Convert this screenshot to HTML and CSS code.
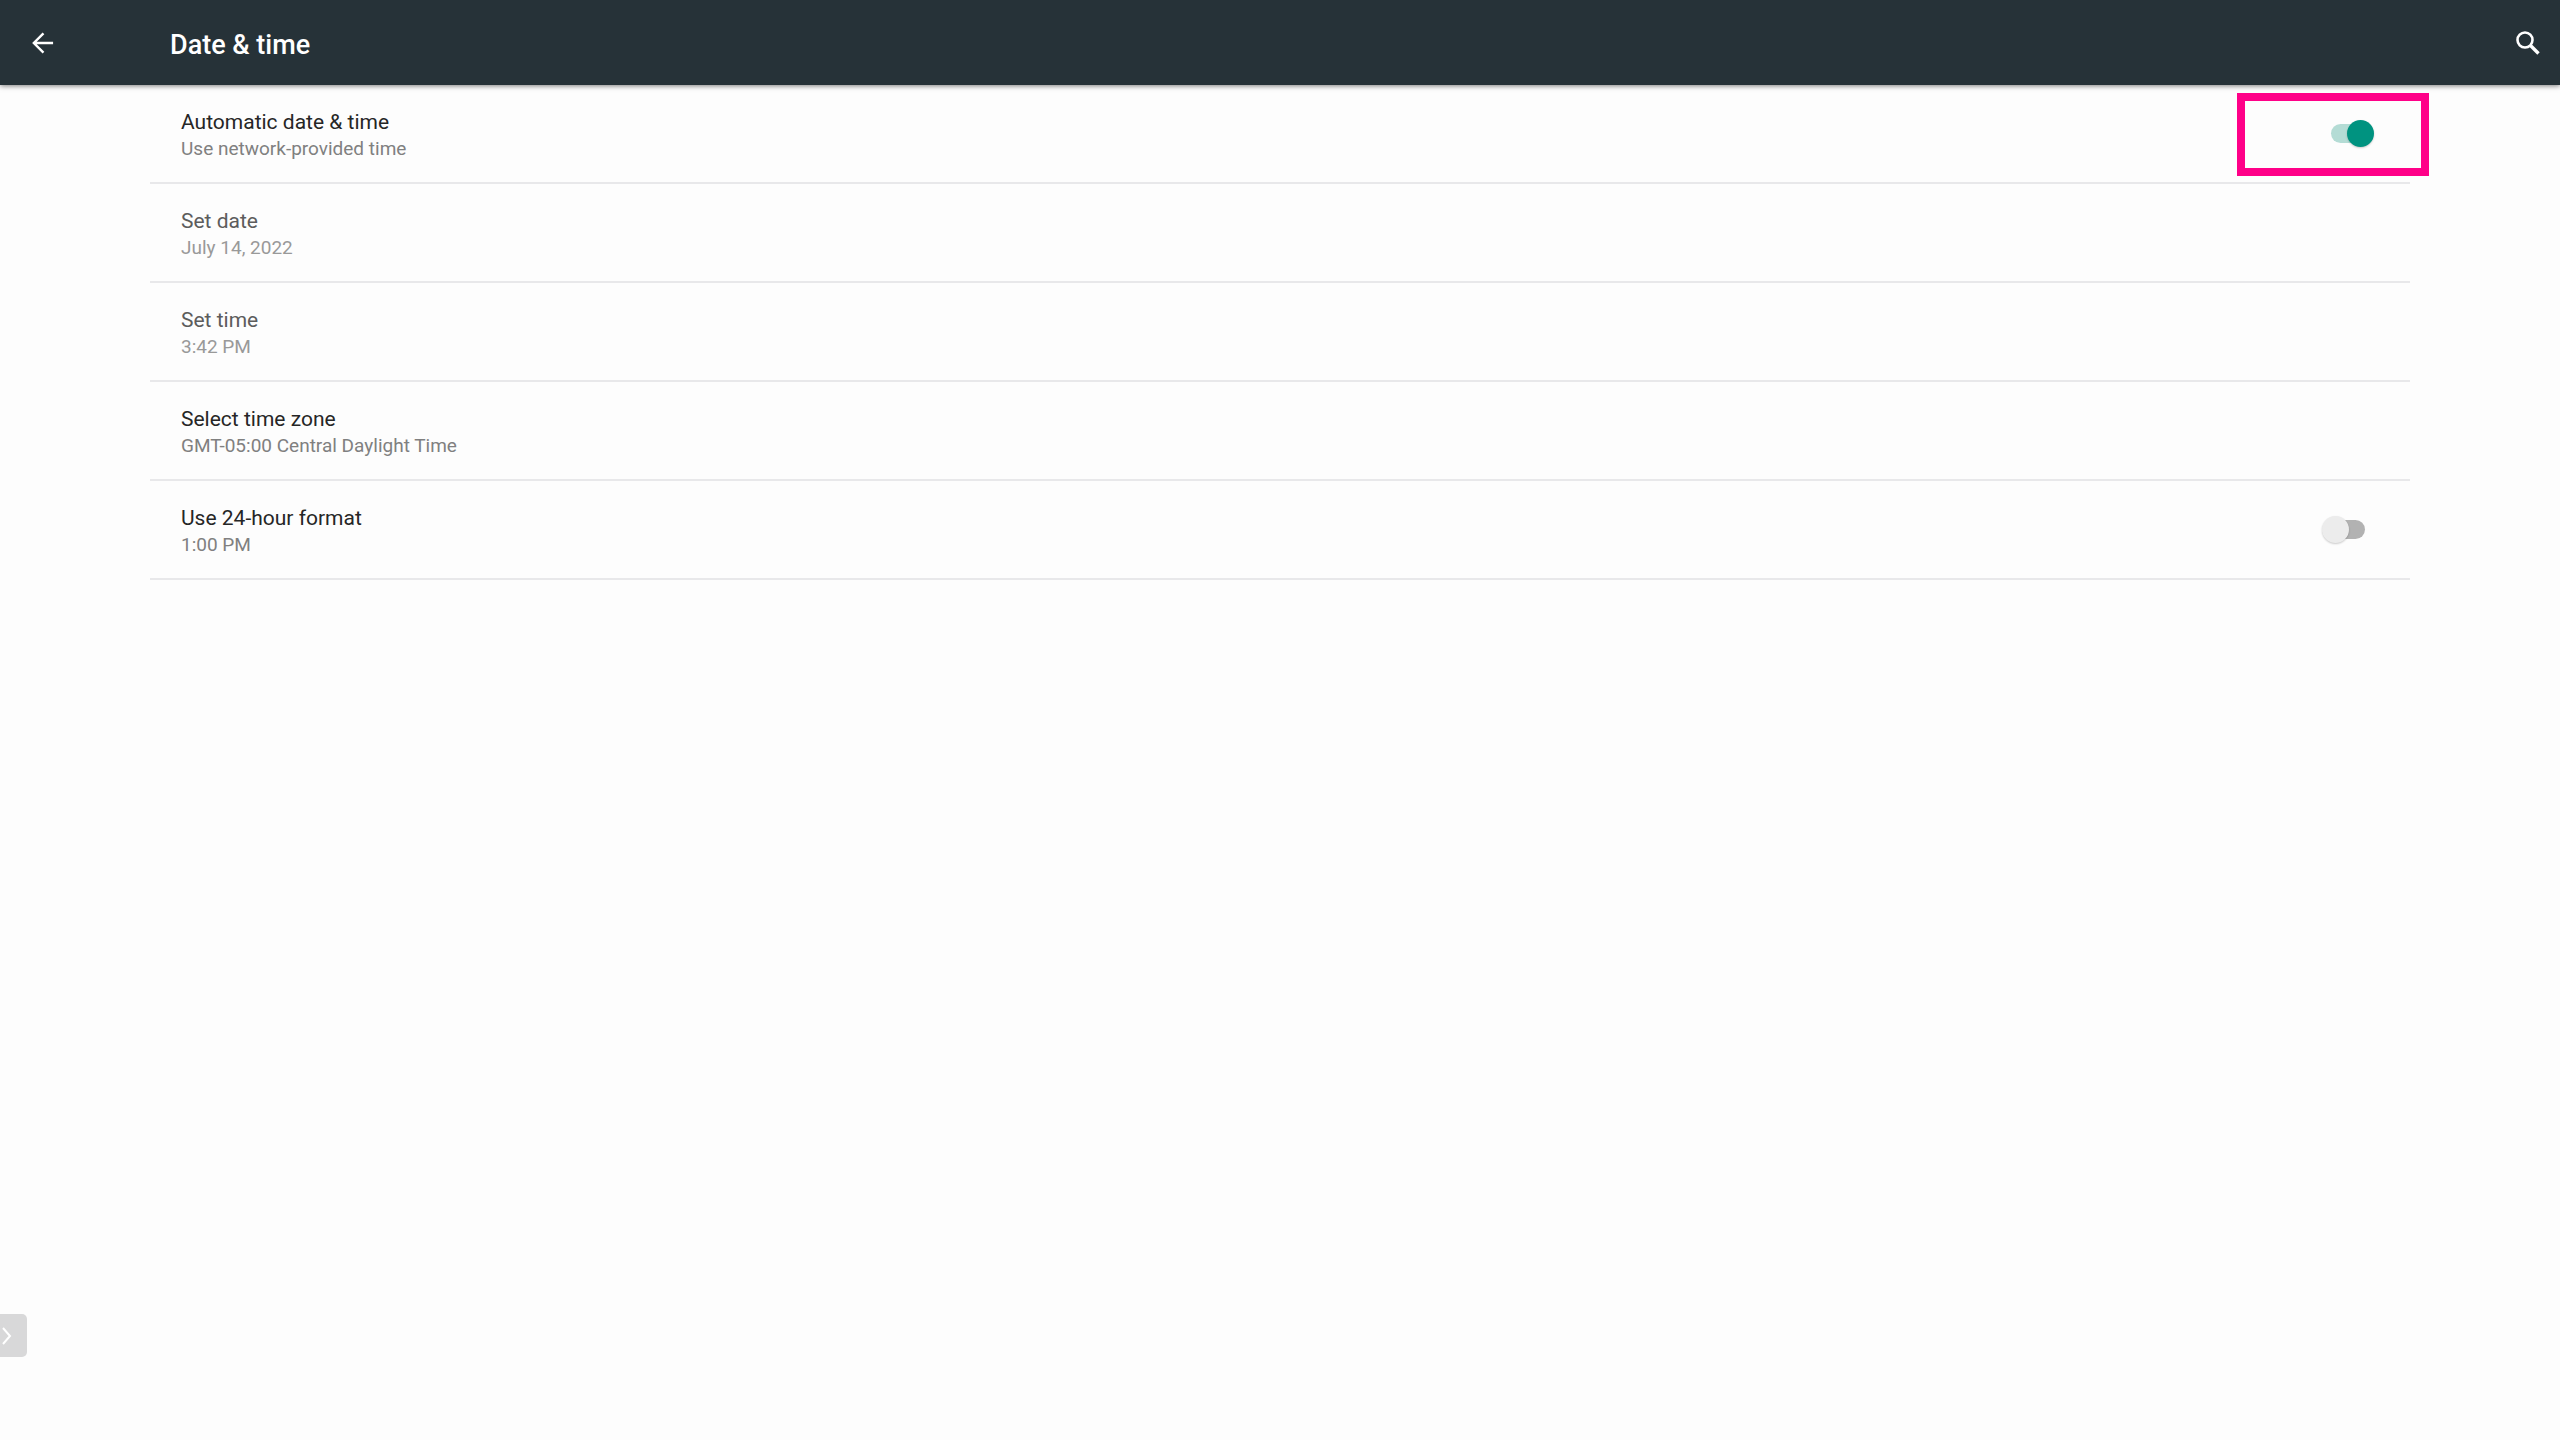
FILE: index.html
```html
<!DOCTYPE html>
<html lang="en">
<head>
  <meta charset="UTF-8" />
  <title>Date &amp; time</title>
  <link rel="stylesheet" href="styles.css">
</head>
<body>
  <header class="toolbar">
    <button class="icon-button back" aria-label="Back">
      <svg viewBox="0 0 24 24" fill="none" stroke="currentColor" stroke-width="2.6">
        <path d="M23 12H2.5M12.5 1.5L2 12l10.500 10.500" />
      </svg>
    </button>
    <h1>Date &amp; time</h1>
    <button class="icon-button search" aria-label="Search">
      <svg viewBox="0 0 24 24" fill="none" stroke="currentColor">
        <circle cx="9" cy="9" r="7.500" stroke-width="2.600" />
        <path d="M14.500 14.500L22.500 22.500" stroke-width="3.400" />
      </svg>
    </button>
  </header>

  <main class="settings">
    <div class="row">
      <label class="text" for="autoTime">
        <span class="name">Automatic date &amp; time</span>
        <span class="summary">Use network-provided time</span>
      </label>
      <input class="switch" type="checkbox" id="autoTime" checked>
      <div class="highlight"></div>
    </div>

    <button class="row" disabled>
      <span class="text">
        <span class="name">Set date</span>
        <span class="summary">July 14, 2022</span>
      </span>
    </button>

    <button class="row" disabled>
      <span class="text">
        <span class="name">Set time</span>
        <span class="summary">3:42 PM</span>
      </span>
    </button>

    <button class="row">
      <span class="text">
        <span class="name">Select time zone</span>
        <span class="summary">GMT-05:00 Central Daylight Time</span>
      </span>
    </button>

    <div class="row">
      <label class="text" for="hourFormat">
        <span class="name">Use 24-hour format</span>
        <span class="summary">1:00 PM</span>
      </label>
      <input class="switch" type="checkbox" id="hourFormat">
    </div>
  </main>

  <button class="side-tab" aria-label="Open side panel">
    <svg viewBox="0 0 10 18" fill="none" stroke="currentColor" stroke-width="2">
      <path d="M1 1l7 8-7 8" />
    </svg>
  </button>
</body>
</html>
```

FILE: styles.css
```css
* {
  box-sizing: border-box;
}

body {
  margin: 0;
  font-family: Roboto, sans-serif;
  background-color: #fdfdfd;
  color: #262626;
}

button {
  border: none;
  background: none;
  font-family: inherit;
  color: inherit;
  cursor: pointer;
}

.toolbar {
  display: flex;
  align-items: center;
  height: 85px;
  padding: 0 20px 0 32px;
  background-color: #263238;
  color: white;
  box-shadow: 0 1px 5px rgba(0, 0, 0, 0.5);
}

.toolbar h1 {
  flex: 1;
  margin: 0;
  padding-top: 4px;
  font-size: 27px;
  line-height: 32px;
  font-weight: 500;
}

.icon-button {
  display: flex;
  padding: 0;
}

.icon-button svg {
  width: 24px;
  height: 24px;
}

.back {
  margin-right: 116px;
}

.back svg {
  width: 22px;
  height: 22px;
}

.settings {
  margin: 0 150px;
}

.row {
  position: relative;
  display: flex;
  align-items: center;
  width: 100%;
  height: 99px;
  padding: 0 36px 0 31px;
  border-bottom: 2px solid #e8e8ea;
  text-align: left;
}

.text {
  flex: 1;
  display: flex;
  flex-direction: column;
  padding-top: 2px;
}

.name {
  font-size: 21px;
  line-height: 28px;
}

.summary {
  font-size: 19px;
  line-height: 26px;
  color: #808080;
}

.row:disabled {
  color: #5c5c5c;
  cursor: default;
}

.row:disabled .summary {
  color: #999;
}

.switch {
  appearance: none;
  position: relative;
  width: 52px;
  height: 27px;
  margin: 0;
  cursor: pointer;
}

.switch::before,
.switch::after {
  content: "";
  position: absolute;
}

/* track */
.switch::before {
  top: 4px;
  left: 9px;
  width: 34px;
  height: 19px;
  border-radius: 10px;
  background-color: #b2b2b2;
}

/* thumb */
.switch::after {
  top: 0;
  left: 0;
  width: 27px;
  height: 27px;
  border-radius: 50%;
  background-color: #ececec;
  box-shadow: 0 1px 2px rgba(0, 0, 0, 0.2);
}

.switch:checked::before {
  background-color: #b4dcd5;
}

.switch:checked::after {
  left: 25px;
  background-color: #009380;
}

.highlight {
  position: absolute;
  top: 8px;
  right: -19px;
  width: 192px;
  height: 83px;
  border: 8px solid #ff0088;
  pointer-events: none;
}

.side-tab {
  position: fixed;
  left: 0;
  bottom: 83px;
  display: flex;
  align-items: center;
  width: 27px;
  height: 43px;
  padding: 0 0 0 2px;
  border-radius: 0 5px 5px 0;
  background-color: #d8d8d9;
  color: white;
}

.side-tab svg {
  width: 10px;
  height: 18px;
}
```
